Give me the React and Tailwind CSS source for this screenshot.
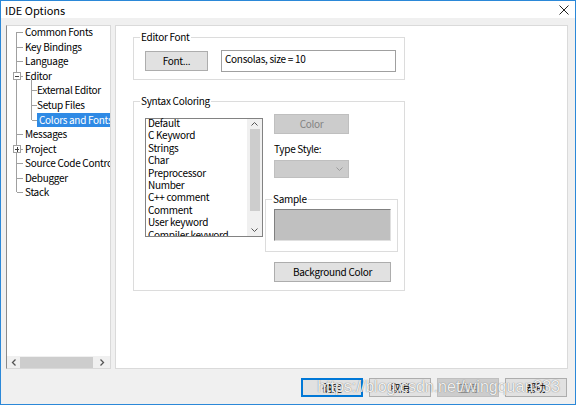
import React from 'react';

const font = { fontFamily: '"Noto Sans CJK SC", "Noto Sans", sans-serif' };

const treeItems = [
  { label: 'Common Fonts', level: 0 },
  { label: 'Key Bindings', level: 0 },
  { label: 'Language', level: 0 },
  { label: 'Editor', level: 0, expander: 'minus' },
  { label: 'External Editor', level: 1 },
  { label: 'Setup Files', level: 1 },
  { label: 'Colors and Fonts', level: 1, selected: true },
  { label: 'Messages', level: 0 },
  { label: 'Project', level: 0, expander: 'plus' },
  { label: 'Source Code Control', level: 0 },
  { label: 'Debugger', level: 0 },
  { label: 'Stack', level: 0 },
];

const syntaxItems = [
  'Default',
  'C Keyword',
  'Strings',
  'Char',
  'Preprocessor',
  'Number',
  'C++ comment',
  'Comment',
  'User keyword',
  'Compiler keyword',
];

const ROW = 14.55;

const TreeLines = () => {
  const cy = (i) => ROW * i + ROW / 2;
  const last = treeItems.length - 1;
  return (
    <svg className="absolute left-0 top-0 pointer-events-none" width="104" height="200">
      <g stroke="#a0a0a0" strokeWidth="1" shapeRendering="crispEdges">
        <line x1="9.5" y1={cy(0)} x2="9.5" y2={cy(last)} />
        {treeItems.map((it, i) =>
          it.level === 0 ? (
            <line key={i} x1="9.5" y1={cy(i) + 0.5} x2="16" y2={cy(i) + 0.5} />
          ) : (
            <line key={i} x1="24.5" y1={cy(i) + 0.5} x2="30" y2={cy(i) + 0.5} />
          )
        )}
        <line x1="24.5" y1={cy(3) + 4} x2="24.5" y2={cy(6)} />
      </g>
      {treeItems.map((it, i) =>
        it.expander ? (
          <g key={'e' + i} shapeRendering="crispEdges">
            <rect x="6.5" y={Math.round(cy(i)) - 3.5} width="7" height="7" fill="white" stroke="#a0a0a0" />
            <line x1="8" y1={Math.round(cy(i)) + 0.5} x2="12" y2={Math.round(cy(i)) + 0.5} stroke="#404040" />
            {it.expander === 'plus' && (
              <line x1="10.5" y1={Math.round(cy(i)) - 2} x2="10.5" y2={Math.round(cy(i)) + 3} stroke="#404040" />
            )}
          </g>
        ) : null
      )}
    </svg>
  );
};

const Button = ({ children, className = '' }) => (
  <div
    className={`flex items-center justify-center bg-[#e1e1e1] border border-[#adadad] text-[10px] leading-[12px] text-black ${className}`}
  >
    {children}
  </div>
);

const GroupBox = ({ title, className = '', children }) => (
  <div className={`relative border border-[#dcdcdc] ${className}`}>
    <span className="absolute left-[6px] top-[-8px] bg-white px-[1px] text-[10px] leading-[14px] text-black">
      {title}
    </span>
    {children}
  </div>
);

export default function App() {
  return (
    <div
      className="w-[576px] h-[405px] flex flex-col border border-[#2b88d8] bg-[#f0f0f0] overflow-hidden select-none tracking-[-0.3px]"
      style={font}
    >
      {/* Title bar */}
      <div className="h-[17px] bg-white flex items-center justify-between pl-[4px] pr-[6px]">
        <span className="text-[11px] leading-[14px] text-black tracking-normal">IDE Options</span>
        <svg width="10" height="10" viewBox="0 0 10 10">
          <path d="M0.5 0.5 L9.5 9.5 M9.5 0.5 L0.5 9.5" stroke="#222" strokeWidth="1" />
        </svg>
      </div>

      {/* Body */}
      <div className="flex-1 flex flex-col pt-[7px] pl-[5px] pr-[7px] pb-[7px]">
        <div className="flex h-[344px] gap-[4px]">
          {/* Tree panel */}
          <div className="w-[105px] h-full bg-white border border-[#d9d9d9] border-l-[#8a8a8a] flex flex-col">
            <div className="relative flex-1 -mt-[1px] overflow-hidden">
              <TreeLines />
              {treeItems.map((it) => (
                <div
                  key={it.label}
                  className={`h-[14.55px] flex items-center whitespace-nowrap text-[10px] ${
                    it.level === 0 ? 'pl-[18px]' : 'pl-[30px]'
                  }`}
                >
                  <span
                    className={
                      it.selected
                        ? 'bg-[#2f8ae5] text-white px-[2px] h-[14px] leading-[14px]'
                        : 'text-black leading-[14px]'
                    }
                  >
                    {it.label}
                  </span>
                </div>
              ))}
            </div>
            {/* horizontal scrollbar */}
            <div className="h-[12px] flex items-center bg-[#f0f0f0]">
              <div className="w-[13px] flex items-center justify-center">
                <svg width="6" height="7" viewBox="0 0 6 7">
                  <path d="M4.5 0.5 L1.5 3.5 L4.5 6.5" fill="none" stroke="#555" strokeWidth="1.3" />
                </svg>
              </div>
              <div className="w-[73px] h-[11px] bg-[#cdcdcd]" />
              <div className="flex-1 flex items-center justify-center">
                <svg width="6" height="7" viewBox="0 0 6 7">
                  <path d="M1.5 0.5 L4.5 3.5 L1.5 6.5" fill="none" stroke="#555" strokeWidth="1.3" />
                </svg>
              </div>
            </div>
          </div>

          {/* Right panel */}
          <div className="w-[453px] h-full bg-white border border-[#dadada] pl-[17px] pt-[11px]">
            <GroupBox title="Editor Font" className="w-[272px] h-[43px]">
              <div className="flex items-start pl-[11px] pt-[12px] gap-[13px]">
                <Button className="w-[63px] h-[20px] mt-[1px]">Font...</Button>
                <div className="w-[175px] h-[22px] border border-[#a0a0a0] pl-[3px] pt-[1px] text-[10px] leading-[14px] text-black">
                  Consolas, size = 10
                </div>
              </div>
            </GroupBox>

            <GroupBox title="Syntax Coloring" className="w-[272px] h-[190px] mt-[21px]">
              <div className="flex items-start pl-[11px] gap-[11px]">
                {/* listbox */}
                <div className="mt-[16px] w-[118px] h-[119px] border border-[#828282] flex">
                  <div className="flex-1 pl-[2px] -mt-[2px] overflow-hidden">
                    {syntaxItems.map((s) => (
                      <div key={s} className="h-[12.4px] leading-[12.4px] text-[10px] text-black whitespace-nowrap">
                        {s}
                      </div>
                    ))}
                  </div>
                  <div className="w-[15px] bg-[#f0f0f0] flex flex-col items-center">
                    <div className="h-[10px] flex items-center justify-center">
                      <svg width="7" height="4" viewBox="0 0 7 4">
                        <path d="M0.5 3.5 L3.5 0.5 L6.5 3.5" fill="none" stroke="#555" strokeWidth="1" />
                      </svg>
                    </div>
                    <div className="w-[10px] h-[82px] bg-[#cdcdcd]" />
                    <div className="flex-1" />
                    <div className="h-[12px] flex items-center justify-center">
                      <svg width="7" height="4" viewBox="0 0 7 4">
                        <path d="M0.5 0.5 L3.5 3.5 L6.5 0.5" fill="none" stroke="#555" strokeWidth="1" />
                      </svg>
                    </div>
                  </div>
                </div>

                {/* right column */}
                <div className="mt-[12px] flex flex-col">
                  <div className="w-[75px] h-[20px] bg-[#cccccc] border border-[#bfbfbf] flex items-center justify-center text-[10px] leading-[12px] text-[#838383]">
                    Color
                  </div>
                  <div className="mt-[9px] h-[12px] leading-[12px] text-[10px] text-black">Type Style:</div>
                  <div className="mt-[5px] w-[75px] h-[18px] bg-[#cccccc] border border-[#bfbfbf] flex items-center justify-end pr-[5px]">
                    <svg width="7" height="4" viewBox="0 0 7 4">
                      <path d="M0.5 0.5 L3.5 3.5 L6.5 0.5" fill="none" stroke="#9a9a9a" strokeWidth="1" />
                    </svg>
                  </div>
                  <GroupBox title="Sample" className="mt-[21px] -ml-[9px] w-[133px] h-[53px]">
                    <div className="pl-[8px] pt-[9px]">
                      <div className="w-[117px] h-[32px] bg-[#c0c0c0] border border-[#e0e0e0] border-t-[#808080] border-l-[#808080]" />
                    </div>
                  </GroupBox>
                  <Button className="mt-[10px] w-[117px] h-[20px]">Background Color</Button>
                </div>
              </div>
            </GroupBox>
          </div>
        </div>

        {/* Dialog buttons */}
        <div className="relative mt-[9px] flex justify-end gap-[6px] pr-[1px]">
          <div className="w-[62px] h-[19px] flex items-center justify-center bg-[#e1e1e1] border-2 border-[#0078d7] text-[10px] leading-[12px] text-black">
            确定
          </div>
          <Button className="w-[62px] h-[19px]">取消</Button>
          <div className="w-[62px] h-[19px] flex items-center justify-center bg-[#cccccc] border border-[#bfbfbf] text-[10px] leading-[12px] text-[#838383]">
            应用
          </div>
          <Button className="w-[62px] h-[19px]">帮助</Button>
          <span
            className="absolute right-[8px] top-[-1px] text-[16px] leading-[20px] tracking-normal text-white/90 whitespace-nowrap pointer-events-none [text-shadow:0_0_1px_#555]"
            style={{ fontFamily: '"Liberation Sans", Arial, sans-serif' }}
          >
            https://blog.csdn.net/wingquan333
          </span>
        </div>
      </div>
    </div>
  );
}
